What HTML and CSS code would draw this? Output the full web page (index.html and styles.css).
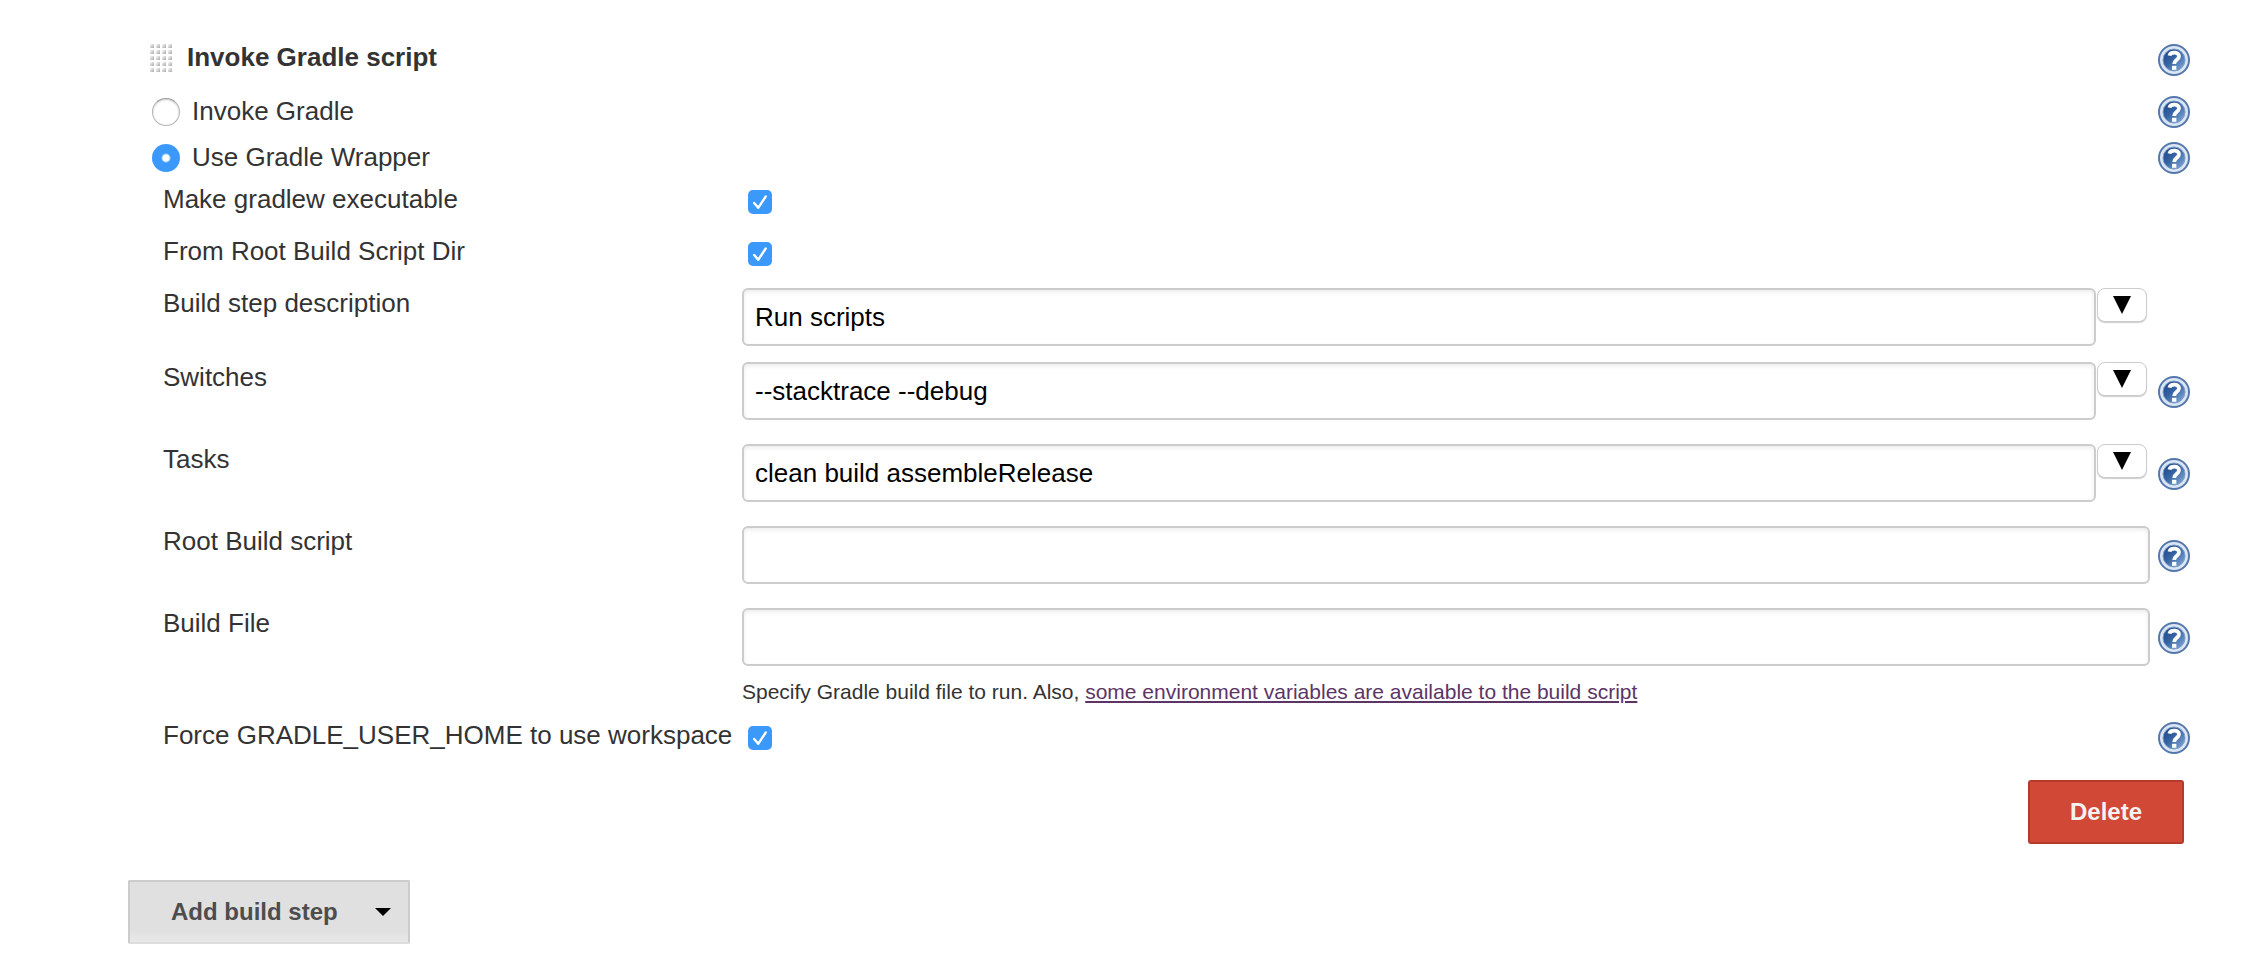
FILE: index.html
```
<!DOCTYPE html>
<html lang="en">
<head>
  <meta charset="UTF-8">
  <meta name="viewport" content="width=device-width, initial-scale=1.0">
  <title>Invoke Gradle script</title>
  <link rel="stylesheet" href="styles.css">
</head>
<body>
  <!-- shared icon shapes -->
  <svg class="defs" aria-hidden="true">
    <defs>
      <linearGradient id="help-fill" x1="0" y1="0" x2="1" y2="1">
        <stop offset="0" stop-color="#1d4482"/>
        <stop offset="0.45" stop-color="#3563a3"/>
        <stop offset="1" stop-color="#8db0dc"/>
      </linearGradient>
      <linearGradient id="dot-fill" x1="0" y1="0" x2="1" y2="1">
        <stop offset="0.1" stop-color="#f4f4f4"/>
        <stop offset="1" stop-color="#a8a8a8"/>
      </linearGradient>
      <pattern id="dots" width="6" height="6" patternUnits="userSpaceOnUse">
        <rect width="4" height="4" fill="url(#dot-fill)"/>
      </pattern>
      <symbol id="help" viewBox="0 0 32 32">
        <circle cx="16" cy="16" r="15" fill="#dbe6f5" stroke="#5577ac" stroke-width="2"/>
        <circle cx="16" cy="16" r="11" fill="url(#help-fill)" stroke="#7f9dca" stroke-width="1"/>
        <path d="M11.4 11.6C12.4 7.6 21 7.4 21 12.2C21 15.8 16.2 15.6 16.2 20" fill="none" stroke="#fff" stroke-width="3.8"/>
        <rect x="14" y="21.8" width="4.4" height="4" fill="#fff"/>
      </symbol>
    </defs>
  </svg>

  <form class="step">
    <div class="row row-title">
      <svg class="grip" viewBox="0 0 22 28" aria-hidden="true"><rect width="22" height="28" fill="url(#dots)"/></svg>
      <h2>Invoke Gradle script</h2>
      <button type="button" class="help" aria-label="Help for Invoke Gradle script"><svg><use href="#help"/></svg></button>
    </div>
    <div class="row row-radio">
      <input type="radio" name="wrapper" id="invoke-gradle">
      <label for="invoke-gradle">Invoke Gradle</label>
      <button type="button" class="help" aria-label="Help for Invoke Gradle"><svg><use href="#help"/></svg></button>
    </div>
    <div class="row row-radio">
      <input type="radio" name="wrapper" id="use-wrapper" checked>
      <label for="use-wrapper">Use Gradle Wrapper</label>
      <button type="button" class="help" aria-label="Help for Use Gradle Wrapper"><svg><use href="#help"/></svg></button>
    </div>

    <div class="fields">
      <div class="field field-check">
        <label for="executable">Make gradlew executable</label>
        <input type="checkbox" id="executable" checked>
      </div>
      <div class="field field-check">
        <label for="from-root">From Root Build Script Dir</label>
        <input type="checkbox" id="from-root" checked>
      </div>
      <div class="field field-short">
        <label for="description">Build step description</label>
        <div class="combo">
          <input type="text" id="description" value="Run scripts">
          <button type="button" class="expand" aria-label="Expand"><svg viewBox="0 0 18 18"><path d="M0 0H18L9 18Z"/></svg></button>
        </div>
      </div>
      <div class="field">
        <label for="switches">Switches</label>
        <div class="combo">
          <input type="text" id="switches" value="--stacktrace --debug">
          <button type="button" class="expand" aria-label="Expand"><svg viewBox="0 0 18 18"><path d="M0 0H18L9 18Z"/></svg></button>
        </div>
        <button type="button" class="help" aria-label="Help for Switches"><svg><use href="#help"/></svg></button>
      </div>
      <div class="field">
        <label for="tasks">Tasks</label>
        <div class="combo">
          <input type="text" id="tasks" value="clean build assembleRelease">
          <button type="button" class="expand" aria-label="Expand"><svg viewBox="0 0 18 18"><path d="M0 0H18L9 18Z"/></svg></button>
        </div>
        <button type="button" class="help" aria-label="Help for Tasks"><svg><use href="#help"/></svg></button>
      </div>
      <div class="field">
        <label for="root-script">Root Build script</label>
        <input type="text" id="root-script">
        <button type="button" class="help" aria-label="Help for Root Build script"><svg><use href="#help"/></svg></button>
      </div>
      <div class="field field-described">
        <label for="build-file">Build File</label>
        <div>
          <input type="text" id="build-file">
          <p class="description">Specify Gradle build file to run. Also, <a href="#">some environment variables are available to the build script</a></p>
        </div>
        <button type="button" class="help" aria-label="Help for Build File"><svg><use href="#help"/></svg></button>
      </div>
      <div class="field field-check">
        <label for="force-home">Force GRADLE_USER_HOME to use workspace</label>
        <input type="checkbox" id="force-home" checked>
        <button type="button" class="help" aria-label="Help for Force GRADLE_USER_HOME"><svg><use href="#help"/></svg></button>
      </div>
    </div>

    <div class="actions">
      <button type="button" class="delete">Delete</button>
    </div>
  </form>

  <button type="button" class="add">Add build step <svg viewBox="0 0 16 8"><path d="M0 0H16L8 8Z"/></svg></button>
</body>
</html>
```
FILE: styles.css
```
* {
  box-sizing: border-box;
}
body {
  margin: 0;
  padding: 42px 58px 10px 128px;
  background-color: #fff;
  color: #333;
  font-family: Helvetica, "Liberation Sans", Arial, sans-serif;
  font-size: 26px;
  line-height: 30px;
}
button, input {
  font: inherit;
}
.defs {
  position: absolute;
  width: 0;
  height: 0;
}
.row {
  display: flex;
  align-items: flex-start;
  padding-left: 24px;
}
.row-title {
  height: 54px;
  padding-left: 22px;
}
.row-radio {
  height: 46px;
}
.row-radio + .row-radio {
  height: 42px;
}
h2 {
  margin: 0;
  font-size: 26px;
}
.grip {
  width: 22px;
  height: 28px;
  margin: 2px 15px 0 0;
}
.row .help {
  margin-left: auto;
}
.row-title .help {
  margin-top: 2px;
}
.help {
  width: 32px;
  height: 32px;
  padding: 0;
  border: 0;
  background: none;
  cursor: pointer;
}
.help svg {
  display: block;
  width: 32px;
  height: 32px;
}

/* radios and tick boxes */
input[type="radio"] {
  appearance: none;
  width: 28px;
  height: 28px;
  margin: 2px 12px 0 0;
  border: 1px solid #b4b4b4;
  border-top-color: #999;
  border-radius: 50%;
  background-color: #fff;
  box-shadow: inset 0 1px 2px rgba(0, 0, 0, 0.2);
}
input[type="radio"]:checked {
  border: 0;
  background: radial-gradient(circle, #fff 3px, #3b99fc 5px);
  box-shadow: none;
}
input[type="checkbox"] {
  appearance: none;
  width: 24px;
  height: 24px;
  margin: 6px 0 0 6px;
  border-radius: 5px;
  background-color: #fff;
  border: 1px solid #b4b4b4;
}
input[type="checkbox"]:checked {
  border: 0;
  background: #3b99fc url("data:image/svg+xml,%3Csvg xmlns='http://www.w3.org/2000/svg' viewBox='0 0 24 24'%3E%3Cpath d='M6.2 13L10.2 17.8L17.8 6.4' fill='none' stroke='white' stroke-width='2.4' stroke-linecap='round' stroke-linejoin='round'/%3E%3C/svg%3E");
}

/* label | control | help */
.field {
  display: grid;
  grid-template-columns: 579px 1fr 32px;
  align-items: start;
  padding-left: 35px;
  min-height: 82px;
}
.field-check {
  min-height: 52px;
}
.field-short {
  min-height: 74px;
}
.field-described {
  min-height: 112px;
}
.field label {
  white-space: nowrap;
}
.field .help {
  grid-column: 3;
  margin-top: 14px;
}
.field-check .help {
  margin-top: 2px;
}
input[type="text"] {
  display: block;
  width: calc(100% - 8px);
  height: 58px;
  padding: 0 11px;
  border: 2px solid #ccc;
  border-radius: 6px;
  background-color: #fff;
  box-shadow: inset 0 2px 4px rgba(0, 0, 0, 0.08);
  color: #000;
}
.combo {
  display: flex;
  align-items: flex-start;
  gap: 1px;
  padding-right: 11px;
}
.combo input[type="text"] {
  flex: 1;
  width: auto;
}
.expand {
  display: flex;
  justify-content: center;
  width: 50px;
  height: 34px;
  padding: 7px 0 0;
  border: 1px solid #ccc;
  border-radius: 8px;
  background-color: #fff;
  box-shadow: 0 1px 1px rgba(0, 0, 0, 0.2);
}
.expand svg {
  width: 18px;
  height: 18px;
}
.description {
  margin: 12px 0 0;
  font-size: 21px;
  line-height: 28px;
}
.description a {
  color: #5c3566;
}

/* buttons */
.actions {
  display: flex;
  justify-content: flex-end;
  padding: 8px 6px 36px 0;
}
.delete {
  width: 156px;
  height: 64px;
  border: 2px solid #b33a2c;
  border-radius: 3px;
  background-color: #d14836;
  color: #f3f3f3;
  font-size: 24px;
  font-weight: bold;
}
.add {
  display: flex;
  align-items: center;
  justify-content: space-between;
  width: 282px;
  height: 64px;
  padding: 0 17px 0 41px;
  border: 2px solid #ccc;
  border-bottom-color: #ddd;
  border-radius: 2px;
  background: linear-gradient(#e0e0e0 80%, #e8e8e8);
  color: #4d4d4d;
  font-size: 24px;
  font-weight: bold;
}
.add svg {
  width: 16px;
  height: 8px;
}
```
